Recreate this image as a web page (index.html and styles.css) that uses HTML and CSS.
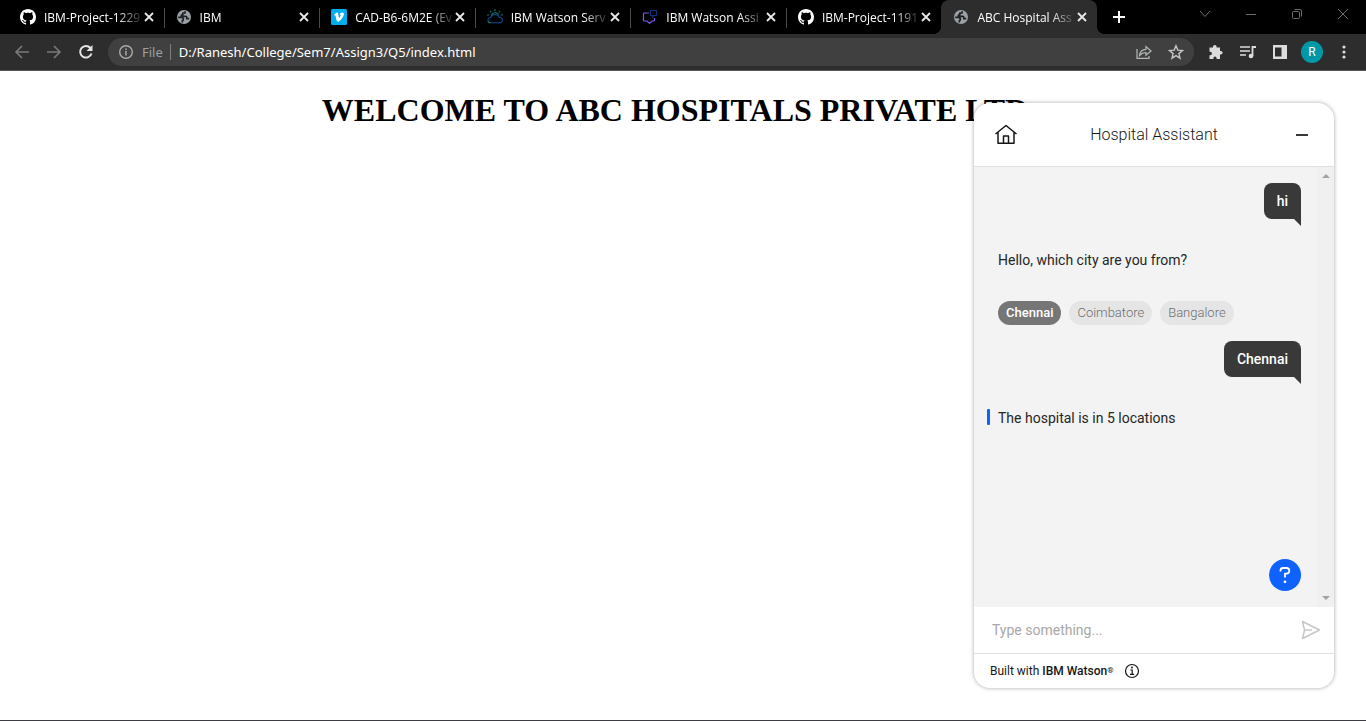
FILE: index.html
```html
<!DOCTYPE html>
<html lang="en">
<head>
<meta charset="utf-8">
<title>ABC Hospital Assistant</title>
<link rel="stylesheet" href="styles.css">
</head>
<body>
<svg class="defs" aria-hidden="true">
  <symbol id="github" viewBox="0 0 16 16"><path fill="#fff" d="M8 0C3.58 0 0 3.58 0 8c0 3.54 2.29 6.53 5.47 7.59.4.07.55-.17.55-.38 0-.19-.01-.82-.01-1.49-2.01.37-2.53-.49-2.69-.94-.09-.23-.48-.94-.82-1.13-.28-.15-.68-.52-.01-.53.63-.01 1.08.58 1.23.82.72 1.21 1.87.87 2.33.66.07-.52.28-.87.51-1.07-1.78-.2-3.64-.89-3.64-3.95 0-.87.31-1.59.82-2.15-.08-.2-.36-1.02.08-2.12 0 0 .67-.21 2.2.82.64-.18 1.32-.27 2-.27s1.36.09 2 .27c1.53-1.04 2.2-.82 2.2-.82.44 1.1.16 1.92.08 2.12.51.56.82 1.27.82 2.15 0 3.07-1.87 3.75-3.65 3.95.29.25.54.73.54 1.48 0 1.07-.01 1.93-.01 2.2 0 .21.15.46.55.38A8.01 8.01 0 0 0 16 8c0-4.42-3.58-8-8-8z"/></symbol>
  <symbol id="globe" viewBox="0 0 16 16"><circle cx="8" cy="8" r="7" fill="#9aa0a6"/><path fill="none" stroke="#202124" stroke-width="1.700" stroke-linejoin="round" d="M2.200 8.300h3.300q1.800 0 1.800 1.700v.8q0 .9-1 .9v1.700M9 2.300V4H6.800v2H5.400v1.400h4.400q1 0 1 1v1.300h2.400"/></symbol>
  <symbol id="close" viewBox="0 0 16 16"><path d="M4 4l8 8M12 4l-8 8" stroke="#e8eaed" stroke-width="1.800"/></symbol>
</svg>
<div class="browser">
  <div class="tabstrip">
    <div class="tab"><svg class="fav"><use href="#github"/></svg><span class="tab-title">IBM-Project-1229</span><button class="tab-close" aria-label="Close tab"><svg><use href="#close"/></svg></button></div>
    <div class="tab"><svg class="fav"><use href="#globe"/></svg><span class="tab-title">IBM</span><button class="tab-close" aria-label="Close tab"><svg><use href="#close"/></svg></button></div>
    <div class="tab"><svg class="fav" viewBox="0 0 16 16"><rect width="16" height="16" rx="1.500" fill="#00adef"/><path fill="#fff" d="M3 5.700 5.400 3.700c1-.7 1.600-.2 1.800 1l.6 3.300c.2.900.5 1 1 .2.600-.8.900-1.500.9-1.900 0-.6-.4-.7-1-.5.500-1.700 1.400-2.500 2.700-2.400 1.300.1 1.700 1 1.400 2.300-.5 2.300-2.300 4.600-4.300 6.300-1.500 1.200-2.600.7-3-.7L4.600 7.200c-.2-.8-.5-.9-1.100-.6z"/></svg><span class="tab-title">CAD-B6-6M2E (Ev</span><button class="tab-close" aria-label="Close tab"><svg><use href="#close"/></svg></button></div>
    <div class="tab"><svg class="fav" viewBox="0 0 16 16" fill="none"><path d="M1 11.500a2.600 2.600 0 0 1 2.500-3A4.500 4.500 0 0 1 8 5.500a4.500 4.500 0 0 1 4.400 3.100 2.600 2.600 0 0 1 .6 5.200H3.500" stroke="#0b4b8f" stroke-width="1.100"/><path d="M1 11.500c0 1.500 1.200 2.300 2.500 2.300M8 0v2M3 2l1.200 1.300M13 2l-1.200 1.300M0 6h2M14 6h2M4.300 6.500a4.200 4.200 0 0 1 7.400-1" stroke="#087c7b" stroke-width="1.100"/></svg><span class="tab-title">IBM Watson Serv</span><button class="tab-close" aria-label="Close tab"><svg><use href="#close"/></svg></button></div>
    <div class="tab"><svg class="fav" viewBox="0 0 16 16" fill="none"><path d="M7 4H2.500Q1.500 4 1.500 5v6q0 1 1 1H5l2.500 2.500L10 12h1.500q1 0 1-1V9" stroke="#7c58ee" stroke-width="1.200"/><path d="M8.500 1.500h6v5H12L10.500 8V6.500h-2z" stroke="#132e78" stroke-width="1.200"/></svg><span class="tab-title">IBM Watson Assi</span><button class="tab-close" aria-label="Close tab"><svg><use href="#close"/></svg></button></div>
    <div class="tab last"><svg class="fav"><use href="#github"/></svg><span class="tab-title">IBM-Project-1191</span><button class="tab-close" aria-label="Close tab"><svg><use href="#close"/></svg></button></div>
    <div class="tab active"><svg class="fav"><use href="#globe"/></svg><span class="tab-title">ABC Hospital Ass</span><button class="tab-close" aria-label="Close tab"><svg><use href="#close"/></svg></button></div>
    <button class="new-tab" aria-label="New tab"><svg viewBox="0 0 16 16"><path d="M8 2v12M2 8h12" stroke="#fff" stroke-width="2"/></svg></button>
    <div class="window-controls">
      <button aria-label="Search tabs"><svg viewBox="0 0 12 12"><path d="M1 3l5 5.500L11 3"/></svg></button>
      <button aria-label="Minimize"><svg viewBox="0 0 12 12"><path d="M1 6.500h10"/></svg></button>
      <button aria-label="Restore"><svg viewBox="0 0 12 12"><rect x="1.500" y="3.500" width="7" height="7" rx="1"/><path d="M3.500 1.500H9q1.500 0 1.500 1.500v5.500"/></svg></button>
      <button aria-label="Close window"><svg viewBox="0 0 12 12"><path d="M1 1l10 10M11 1L1 11"/></svg></button>
    </div>
  </div>
  <div class="toolbar">
    <div class="nav">
      <button aria-label="Back"><svg viewBox="0 0 16 16"><path d="M15 8H2M8 2L2 8l6 6" fill="none" stroke="#77797c" stroke-width="1.600"/></svg></button>
      <button aria-label="Forward"><svg viewBox="0 0 16 16"><path d="M1 8h13M8 2l6 6-6 6" fill="none" stroke="#77797c" stroke-width="1.600"/></svg></button>
      <button aria-label="Reload"><svg viewBox="0 0 16 16"><path d="M13.500 9.500A5.800 5.800 0 1 1 12.400 4" fill="none" stroke="#e4e4e4" stroke-width="2"/><path d="M14.500 1v6h-6z" fill="#e4e4e4"/></svg></button>
    </div>
    <div class="omnibox">
      <svg class="info" viewBox="0 0 16 16" fill="none"><circle cx="8" cy="8" r="6.300" stroke="#a8abae" stroke-width="1.400"/><path d="M8 7v4.500M8 4.500v1.600" stroke="#a8abae" stroke-width="1.500"/></svg>
      <span class="scheme">File</span>
      <input class="url" type="text" aria-label="Address" value="D:/Ranesh/College/Sem7/Assign3/Q5/index.html">
      <button aria-label="Share"><svg viewBox="0 0 16 16" fill="none" stroke="#b5b7b9" stroke-width="1.200"><path d="M1 5v9.400h12V12"/><path d="M3.500 11.500C4 7.500 6.500 5.500 10 5.300V2.500L15 7l-5 4.200V8.500c-2.500 0-4.500.8-6.500 3z"/></svg></button>
      <button aria-label="Bookmark"><svg viewBox="0 0 16 16"><path d="M8 1.800l1.800 4.300 4.700.4-3.600 3.100 1.100 4.600-4-2.500-4 2.500 1.100-4.600L1.500 6.500l4.700-.4z" fill="none" stroke="#c4c6c8" stroke-width="1.400"/></svg></button>
    </div>
    <div class="actions">
      <button aria-label="Extensions"><svg viewBox="0 0 16 16"><path fill="#dcdcdc" d="M1.500 3.500H5v-.8a1.800 1.800 0 0 1 3.600 0v.8H12V7h.8a1.800 1.800 0 0 1 0 3.600H12V15H8.600v-.8a1.600 1.600 0 0 0-3.200 0v.8H1.500v-3.800h.7a1.700 1.700 0 0 0 0-3.400h-.7z"/></svg></button>
      <button aria-label="Media controls"><svg viewBox="0 0 16 16"><path d="M0 3h10M0 7h10M0 11h6" stroke="#dcdcdc" stroke-width="1.600"/><path d="M12.500 12V3H16" fill="none" stroke="#dcdcdc" stroke-width="1.800"/><circle cx="11" cy="12" r="2.300" fill="#dcdcdc"/></svg></button>
      <button aria-label="Side panel"><svg viewBox="0 0 16 16"><path fill="#dcdcdc" fill-rule="evenodd" d="M1 1h14v14H1zM3 3.500v9h6.500v-9z"/></svg></button>
      <button class="avatar" aria-label="Profile">R</button>
      <button aria-label="Menu"><svg viewBox="0 0 16 16" fill="#dcdcdc"><circle cx="8" cy="3" r="1.600"/><circle cx="8" cy="8" r="1.600"/><circle cx="8" cy="13" r="1.600"/></svg></button>
    </div>
  </div>
  <main class="page">
    <h1>WELCOME TO ABC HOSPITALS PRIVATE LTD.</h1>
    <section class="chat" aria-label="Hospital Assistant">
      <header class="chat-head">
        <button aria-label="Home"><svg viewBox="0 0 24 24" fill="none" stroke="#161616" stroke-width="1.500" stroke-linejoin="round"><path d="M1.500 11L12 2.500 22.500 11M4 9.500V20.200H20V9.500M9.500 20v-7h5v7"/></svg></button>
        <h2>Hospital Assistant</h2>
        <button aria-label="Minimize chat"><svg viewBox="0 0 24 24"><path d="M6 12h12" stroke="#393939" stroke-width="2"/></svg></button>
      </header>
      <div class="chat-body">
        <div class="messages">
          <p class="bubble">hi</p>
          <p class="reply">Hello, which city are you from?</p>
          <div class="options">
            <button class="option chosen">Chennai</button>
            <button class="option">Coimbatore</button>
            <button class="option">Bangalore</button>
          </div>
          <p class="bubble">Chennai</p>
          <p class="reply latest">The hospital is in 5 locations</p>
          <button class="help" aria-label="Suggestions"><svg viewBox="0 0 32 32"><path d="M11.500 12.500v-1q0-2.500 2.500-2.500h3.500q2.800 0 2.800 2.800t-2.800 2.800H16v4" fill="none" stroke="#fff" stroke-width="1.800"/><circle cx="16" cy="22.800" r="1.400" fill="#fff"/></svg></button>
        </div>
        <div class="scrollbar"><i class="up"></i><i class="down"></i></div>
      </div>
      <form class="composer">
        <input type="text" placeholder="Type something..." aria-label="Message">
        <button type="button" aria-label="Send"><svg viewBox="0 0 20 20" fill="none" stroke="#c6c6c6" stroke-width="1.500" stroke-linejoin="round"><path d="M1.500 1.500l17 8.500-17 8.500L3.500 10zM3.500 10H11"/></svg></button>
      </form>
      <footer class="chat-foot">
        <span>Built with <b>IBM Watson<sup>®</sup></b></span>
        <button aria-label="About"><svg viewBox="0 0 16 16" fill="none" stroke="#161616" stroke-width="1.200"><circle cx="8" cy="8" r="6.500"/><path d="M6.300 7h1.900v4.300M6 11.300h4.200"/><circle cx="8" cy="4.600" r=".4"/></svg></button>
      </footer>
    </section>
  </main>
</div>
</body>
</html>
```
FILE: styles.css
```css
* { box-sizing: border-box; }
body { margin: 0; font-family: "Open Sans", sans-serif; }
button { border: 0; padding: 0; background: none; color: inherit; font: inherit; display: flex; align-items: center; justify-content: center; flex: none; }
svg { width: 16px; height: 16px; flex: none; display: block; }
.defs { position: absolute; width: 0; height: 0; }
.browser { min-height: 100vh; display: flex; flex-direction: column; border-bottom: 1px solid #3c3c42; }

.tabstrip { display: flex; height: 34px; padding-left: 8px; background: #000; color: #fff; font-size: 12px; }
.tab { position: relative; flex: 1 1 0; min-width: 0; display: flex; align-items: center; gap: 8px; padding: 0 7px 0 12px; }
.tab:not(.last):not(.active)::after { content: ""; position: absolute; right: -1px; top: 8px; width: 1px; height: 20px; background: #4a4a4a; }
.tab-title { flex: 1; min-width: 0; overflow: hidden; white-space: nowrap; mask-image: linear-gradient(to right, #000 calc(100% - 28px), transparent); }
.tab-close { margin-left: -12px; }
.active { background: #2d2d2d; border-radius: 8px 8px 0 0; }
.active::before { content: ""; position: absolute; left: -8px; right: -8px; bottom: 0; height: 8px; background: radial-gradient(circle at 0 0, transparent 8px, #2d2d2d 8px) left / 8px 8px no-repeat, radial-gradient(circle at 100% 0, transparent 8px, #2d2d2d 8px) right / 8px 8px no-repeat; }
.new-tab { width: 28px; margin: 0 49px 0 8px; }
.window-controls { display: flex; }
.window-controls button { width: 46px; height: 28px; }
.window-controls svg { width: 12px; height: 12px; fill: none; stroke: #6d6d6d; stroke-width: 1; }

.toolbar { display: flex; align-items: center; height: 37px; background: #2d2d2d; border-bottom: 1px solid #57585a; }
.nav { display: flex; gap: 16px; padding: 0 14px; }
.omnibox { flex: 1; min-width: 0; height: 28px; display: flex; align-items: center; padding: 0 10px; border-radius: 14px; background: #404040; color: #fff; font: 13px "Noto Sans", sans-serif; }
.omnibox button { margin-left: 16px; }
.scheme { color: #9aa0a6; margin-left: 8px; padding-right: 7px; border-right: 1px solid #7b7d80; line-height: 16px; }
.url { flex: 1; min-width: 0; border: 0; padding: 0; margin-left: 8px; background: none; color: #fff; font: inherit; outline: 0; }
.actions { display: flex; align-items: center; gap: 16px; padding: 0 14px; }
.avatar { width: 22px; height: 22px; margin: 0 -3px; border-radius: 50%; background: #0097a7; color: #fff; font: 12px Roboto, sans-serif; }

.page { position: relative; flex: 1; background: #fff; padding: 21px 16px 21px 8px; }
h1 { margin: 0; text-align: center; color: #000; font: bold 32px/37px "Liberation Serif", serif; }

.chat { position: absolute; right: 32px; top: 32px; bottom: 32px; width: 360px; display: flex; flex-direction: column; overflow: hidden; border-radius: 16px; background: #fff; color: #161616; font: 14px/18px Roboto, sans-serif; box-shadow: 0 0 4px rgba(0,0,0,.35); }
.chat p, .chat h2 { margin: 0; }
.chat-head { display: flex; align-items: center; height: 64px; padding: 0 20px; border-bottom: 1px solid #e0e0e0; }
.chat-head svg { width: 24px; height: 24px; }
.chat-head h2 { flex: 1; text-align: center; font-size: 16px; font-weight: 300; }
.chat-body { flex: 1; min-height: 0; display: flex; background: #f3f3f3; }
.messages { position: relative; flex: 1; display: flex; flex-direction: column; padding: 16px 16px 16px 24px; }
.bubble { position: relative; align-self: flex-end; padding: 9px 13px; border-radius: 8px 8px 0 8px; background: #393939; color: #fff; font-weight: 500; }
.bubble::after { content: ""; position: absolute; right: 0; top: 100%; border-top: 7px solid #393939; border-left: 7px solid transparent; }
.chat .reply { position: relative; margin-top: 32px; color: #262626; }
.latest::before { content: ""; position: absolute; left: -11px; top: 0; width: 3px; height: 16px; border-radius: 1px; background: #0f62fe; }
.options { display: flex; gap: 8px; margin: 32px 0 16px; }
.option { height: 24px; padding: 0 8px; border-radius: 12px; background: #e5e5e5; color: #6f6f6f; font-size: 13px; font-weight: 300; }
.chosen { background: #767676; color: #fff; font-weight: 500; }
.help { margin: auto 0 0 auto; width: 32px; height: 32px; border-radius: 50%; background: #0f62fe; }
.help svg { width: 32px; height: 32px; }
.scrollbar { width: 17px; display: flex; flex-direction: column; align-items: center; justify-content: space-between; padding: 7px 0; background: #f0f0f0; }
.scrollbar i { border: 4px solid transparent; }
.scrollbar .up { border-top: 0; border-bottom-color: #a3a3a3; }
.scrollbar .down { border-bottom: 0; border-top-color: #a3a3a3; }
.composer { display: flex; align-items: center; height: 47px; padding: 0 13px 0 18px; border-bottom: 1px solid #e0e0e0; }
.composer input { flex: 1; min-width: 0; border: 0; padding: 0; outline: 0; background: none; font: inherit; }
.composer input::placeholder { color: #a8a8a8; }
.composer svg { width: 20px; height: 20px; }
.chat-foot { display: flex; align-items: center; gap: 10px; height: 34px; padding: 0 16px; font-size: 12px; }
.chat-foot b { font-weight: 500; }
.chat-foot sup { font-size: 8px; line-height: 1; vertical-align: 2px; }
```
